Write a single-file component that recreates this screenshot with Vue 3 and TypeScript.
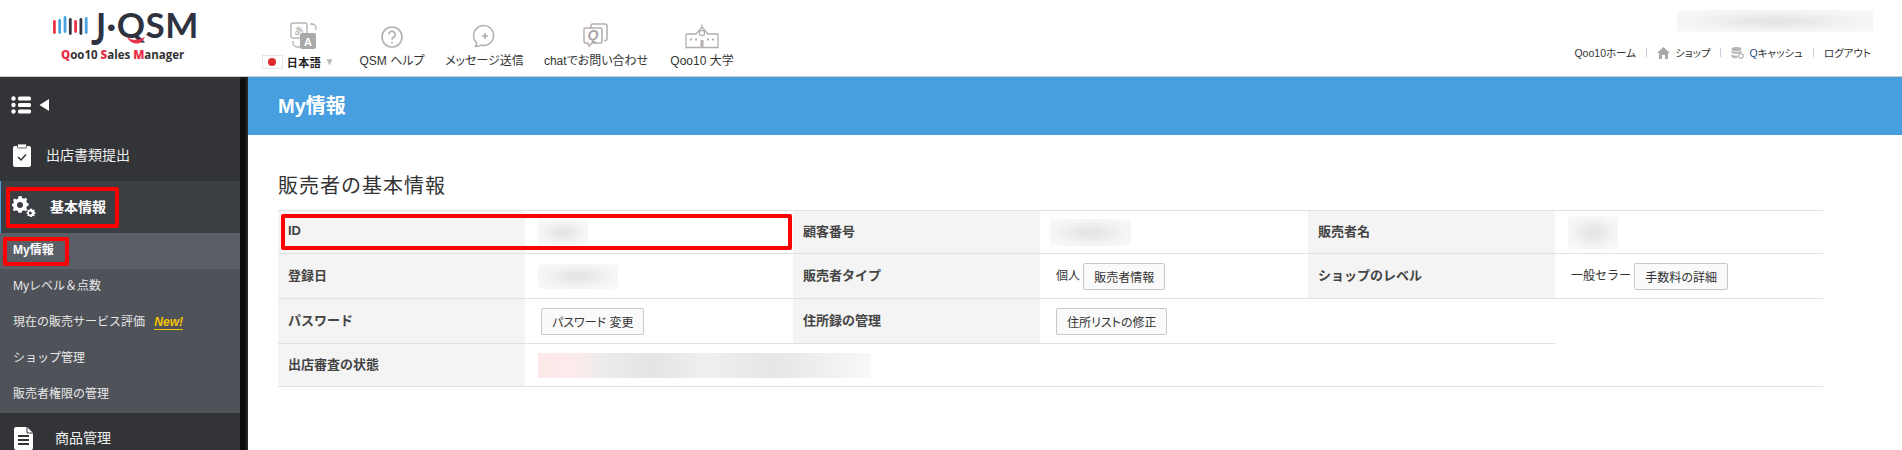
<script setup lang="ts">
interface NavItem {
  label: string
  icon: string
  width: number
}

const navItems: NavItem[] = [
  { label: 'QSM ヘルプ', icon: 'help', width: 92 },
  { label: 'メッセージ送信', icon: 'message', width: 93 },
  { label: 'chatでお問い合わせ', icon: 'chat', width: 130 },
  { label: 'Qoo10 大学', icon: 'school', width: 82 },
]

const subMenu = ['Myレベル＆点数', '現在の販売サービス評価', 'ショップ管理', '販売者権限の管理']

const bars = [
  { x: 1, y: 14, h: 14, c: '#ee3344' },
  { x: 6.300, y: 13, h: 15, c: '#4aa3e0' },
  { x: 11.600, y: 10, h: 17, c: '#4aa3e0' },
  { x: 16.900, y: 12, h: 17, c: '#333645' },
  { x: 22.200, y: 14, h: 13, c: '#ee3344' },
  { x: 27.500, y: 12, h: 17, c: '#333645' },
  { x: 32.800, y: 11, h: 17, c: '#4aa3e0' },
]
</script>

<template>
  <div class="page">
    <header class="header">
      <div class="logo">
        <div class="logo-top">
          <svg class="logo-bars" width="36" height="40" viewBox="0 0 36 40">
            <rect v-for="b in bars" :key="b.x" :x="b.x" :y="b.y" width="2.800" :height="b.h" rx="1.400" :fill="b.c" />
          </svg>
          <span class="logo-name"><span class="logo-j">J</span>·QSM</span>
          <svg class="swoosh" width="18" height="7" viewBox="0 0 18 7"><path d="M0 0c4 3 9 3.500 13 2l5-2c-2 4-5 7-9 6.500C5 6.200 2 4 0 0z" fill="#e8304a" /></svg>
        </div>
        <div class="logo-sub"><b>Q</b>oo10 <b>S</b>ales <b>M</b>anager</div>
      </div>

      <nav class="nav">
        <div class="nav-item lang">
          <svg class="lang-icon" width="28" height="28" viewBox="0 0 28 28">
            <rect x="1" y="1" width="16" height="15" rx="2" fill="#fff" stroke="#b5b5b5" stroke-width="1.400" />
            <text x="9" y="13" class="icon-char" fill="#aaa">あ</text>
            <path d="M20 2h2a4 4 0 0 1 4 4v2M3 19v2a4 4 0 0 0 4 4h3" fill="none" stroke="#b5b5b5" stroke-width="1.400" />
            <rect x="10" y="11" width="16" height="16" rx="2" fill="#a9a9a9" />
            <text x="18" y="24" class="icon-a" fill="#fff">A</text>
          </svg>
          <div class="lang-row">
            <span class="flag"><i></i></span>
            <b>日本語</b>
            <span class="caret">▼</span>
          </div>
        </div>

        <div v-for="item in navItems" :key="item.label" class="nav-item" :style="{ width: `${item.width}px` }">
          <svg v-if="item.icon === 'help'" width="28" height="28" viewBox="0 0 28 28" fill="none" stroke="#b0b0b0">
            <circle cx="14" cy="15" r="10" stroke-width="1.600" />
            <path d="M10.800 12.500a3.200 3.200 0 1 1 4.800 2.800c-1 .6-1.600 1.200-1.600 2.400" stroke-width="1.600" />
            <circle cx="14" cy="20.500" r="1" fill="#b0b0b0" stroke="none" />
          </svg>
          <svg v-else-if="item.icon === 'message'" width="28" height="28" viewBox="0 0 28 28" fill="none" stroke="#b0b0b0">
            <path d="M4.500 24.500c.9-1.300 1.300-2.500 1-3.900A10 10 0 1 1 10 23.200c-1.700.9-3.500 1.500-5.500 1.300z" stroke-width="1.500" />
            <path d="M14 11v6M11 14h6" stroke="#aaa" stroke-width="1.500" />
          </svg>
          <svg v-else-if="item.icon === 'chat'" width="28" height="28" viewBox="0 0 28 28" fill="none" stroke="#b4aeae">
            <path d="M9 6V3.500A1.500 1.500 0 0 1 10.500 2h13A1.500 1.500 0 0 1 25 3.500V17a1.500 1.500 0 0 1-1.500 1.500H22" stroke-width="1.500" />
            <path d="M3.500 6h15A1.500 1.500 0 0 1 20 7.500v12a1.500 1.500 0 0 1-1.500 1.500H10l-3 3-1-3H3.500A1.500 1.500 0 0 1 2 19.500v-12A1.500 1.500 0 0 1 3.500 6z" fill="#fff" stroke-width="1.500" />
            <text x="11" y="18" class="icon-q" fill="#a9a3a3" stroke="none">Q</text>
          </svg>
          <svg v-else width="34" height="28" viewBox="0 0 34 28" fill="none" stroke="#b4aeae">
            <path d="M1 12h10l6-7 6 7h10M1 12v13.500h32V12" stroke-width="1.300" />
            <circle cx="17" cy="11" r="2.600" stroke-width="1.200" />
            <path d="M17 2v3" stroke-width="1" />
            <path d="M5 17.500h2M10 17.500h2M22 17.500h2M27 17.500h2" stroke-width="2" />
            <rect x="15.500" y="18" width="3" height="7.500" fill="#b4aeae" stroke="none" />
          </svg>
          <span class="nav-label">{{ item.label }}</span>
        </div>
      </nav>

      <div class="header-right">
        <div class="user blur"></div>
        <div class="links">
          <span>Qoo10ホーム</span>
          <i class="sep"></i>
          <span class="with-icon">
            <svg width="13" height="12" viewBox="0 0 13 12" fill="#a9a9a9"><path d="M6.500 0 13 6h-2v6H8V8H5v4H2V6H0z" /></svg>
            ショップ
          </span>
          <i class="sep"></i>
          <span class="with-icon">
            <svg width="13" height="12" viewBox="0 0 13 12">
              <ellipse cx="5.500" cy="2" rx="5" ry="2" fill="#b5b5b5" />
              <path d="M.5 3.500c1 1.800 9 1.800 10 0V5.500c-1 1.800-9 1.800-10 0zM.5 7c1 1.800 5 1.800 6 1.500V11c-2 .5-5 0-6-1z" fill="#b5b5b5" />
              <circle cx="10" cy="9" r="2.300" fill="#fff" stroke="#999" />
            </svg>
            <span class="qcash"><span>Q</span>キャッシュ</span>
          </span>
          <i class="sep"></i>
          <span>ログアウト</span>
        </div>
      </div>
    </header>

    <div class="body">
      <aside class="sidebar">
        <div class="side-inner">
          <div class="toggle">
            <svg width="40" height="18" viewBox="0 0 40 18" fill="#fff">
              <circle cx="2.500" cy="2.500" r="2.200" />
              <circle cx="2.500" cy="9" r="2.200" />
              <circle cx="2.500" cy="15.500" r="2.200" />
              <rect x="7" y="0.500" width="13" height="4" rx="1.500" />
              <rect x="7" y="7" width="13" height="4" rx="1.500" />
              <rect x="7" y="13.500" width="13" height="4" rx="1.500" />
              <path d="M29 3v12L19.500 9z" transform="translate(9 0)" />
            </svg>
          </div>

          <div class="group docs-row">
            <svg width="18" height="23" viewBox="0 0 18 23">
              <rect x="0" y="2" width="18" height="21" rx="2" fill="#fff" />
              <rect x="4.500" y="0" width="9" height="4" rx="1" fill="#fff" stroke="#333438" stroke-width="0.800" />
              <path d="M5 13l3 3 5-5.500" fill="none" stroke="#333438" stroke-width="1.500" />
            </svg>
            <span class="group-label docs">出店書類提出</span>
          </div>

          <div class="group active">
            <svg width="24" height="22" viewBox="0 0 24 22" fill="#fff">
              <path d="M8 3l2 .3.700 1.700 1.800.700 1.700-.9 1.500 1.500-.9 1.700.7 1.800 1.700.7v2l-1.700.7-.7 1.800.9 1.700-1.500 1.500-1.700-.9-1.800.7-.7 1.700H7l-.7-1.700-1.800-.7-1.700.9-1.500-1.500.9-1.700-.7-1.800L0 13.200v-2l1.700-.7.700-1.800-.9-1.700L3 5.500l1.700.9 1.800-.7L7.200 3zM8.500 9a3 3 0 1 0 0 6 3 3 0 0 0 0-6z" transform="translate(-.500 -3)" />
              <path d="M19 12.500l1 .3.300.9.900.3.800-.4.700.7-.4.800.3.900.900.4v1l-.9.400-.3.900.4.800-.7.700-.8-.4-.9.300-.3.900h-2l-.3-.9-.9-.3-.8.400-.7-.7.4-.8-.3-.9-.9-.4v-1l.9-.4.3-.9-.4-.8.7-.7.8.4.900-.3.300-.9zM18.300 15.500a1.500 1.500 0 1 0 0 3 1.500 1.500 0 0 0 0-3z" />
            </svg>
            <b class="group-label info">基本情報</b>
          </div>

          <ul class="sub">
            <li class="current"><b>My情報</b></li>
            <li v-for="(name, i) in subMenu" :key="name">
              {{ name }}
              <em v-if="i === 1" class="new">New!</em>
            </li>
          </ul>

          <div class="group last">
            <svg width="19" height="23" viewBox="0 0 19 23">
              <path d="M2 0h11l6 6v15a2 2 0 0 1-2 2H2a2 2 0 0 1-2-2V2a2 2 0 0 1 2-2z" fill="#fff" />
              <path d="M4 9h11M4 13h11M4 17h11" stroke="#333438" stroke-width="2" />
              <path d="M13 0v6h6" fill="none" stroke="#333438" stroke-width="1" />
            </svg>
            <span class="group-label goods">商品管理</span>
          </div>
        </div>
        <div class="scrollbar"><i></i></div>

        <div class="mark mark-info"></div>
        <div class="mark mark-my"></div>
      </aside>

      <main class="main">
        <h1 class="title-bar">My情報</h1>
        <section class="content">
          <h2 class="heading">販売者の基本情報</h2>
          <div class="table-wrap">
            <table class="info-table">
              <colgroup>
                <col class="c-l"><col class="c-v"><col class="c-l"><col class="c-v"><col class="c-l"><col class="c-v">
              </colgroup>
              <tbody>
                <tr class="r1">
                  <th>ID</th>
                  <td><span class="blur b-id"></span></td>
                  <th>顧客番号</th>
                  <td><span class="blur b-no"></span></td>
                  <th>販売者名</th>
                  <td><span class="blur b-name"></span></td>
                </tr>
                <tr class="r2">
                  <th>登録日</th>
                  <td><span class="blur b-date"></span></td>
                  <th>販売者タイプ</th>
                  <td class="has-btn tight">個人 <button type="button">販売者情報</button></td>
                  <th>ショップのレベル</th>
                  <td class="has-btn tight">一般セラー <button type="button">手数料の詳細</button></td>
                </tr>
                <tr class="r3">
                  <th>パスワード</th>
                  <td class="has-btn"><button type="button">パスワード 変更</button></td>
                  <th>住所録の管理</th>
                  <td class="has-btn"><button type="button">住所リストの修正</button></td>
                  <td></td>
                  <td rowspan="2" class="no-line"></td>
                </tr>
                <tr class="r4">
                  <th>出店審査の状態</th>
                  <td colspan="4"><span class="blur b-status"></span></td>
                </tr>
              </tbody>
            </table>
            <div class="mark mark-id"></div>
          </div>
        </section>
      </main>
    </div>
  </div>
</template>

<style>
html,
body {
  margin: 0;
  background: #fff;
}
</style>

<style scoped>
.page {
  width: 1902px;
  height: 450px;
  overflow: hidden;
  font-family: "Liberation Sans", "Noto Sans CJK JP", sans-serif;
  color: #333;
  display: flex;
  flex-direction: column;
}

.header {
  height: 76px;
  flex: none;
  display: flex;
  border-bottom: 1px solid #ccc;
  background: #fff;
  position: relative;
}

.logo {
  width: 262px;
  flex: none;
  padding: 6px 0 0 52px;
  box-sizing: border-box;
}

.logo-top {
  display: flex;
  align-items: flex-start;
  height: 40px;
  position: relative;
}

.logo-bars {
  flex: none;
}

.swoosh {
  position: absolute;
  left: 75px;
  top: 31px;
}

.logo-name {
  font-family: "Lato", sans-serif;
  font-weight: 700;
  font-size: 35px;
  line-height: 36px;
  height: 36px;
  color: #2f3240;
  margin-left: 3px;
  letter-spacing: 0.5px;
}

.logo-j {
  display: inline-block;
  transform: scaleY(1.28);
  transform-origin: 50% 22%;
}

.logo-sub {
  font-family: "Open Sans", sans-serif;
  font-weight: 700;
  font-size: 11.500px;
  line-height: 14px;
  color: #333;
  margin: 2px 0 0 9px;
  white-space: nowrap;
}

.logo-sub b {
  color: #e8304a;
}

.nav {
  display: flex;
  align-items: flex-start;
  padding-top: 22px;
}

.nav-item {
  display: flex;
  flex-direction: column;
  align-items: center;
  font-size: 12px;
  color: #333;
  white-space: nowrap;
}

.nav-item svg {
  height: 28px;
  display: block;
}

.nav-label {
  margin-top: 3px;
  line-height: 17px;
  font-feature-settings: "palt";
}

.lang {
  width: 72px;
  margin-right: 12px;
}

.lang-icon {
  margin-left: 11px;
}

.lang-row {
  display: flex;
  align-items: center;
  margin-top: 3px;
  height: 17px;
  font-size: 11px;
  color: #222;
}

.lang-row b {
  margin-left: 4px;
  letter-spacing: 0.600px;
}

.flag {
  width: 19px;
  height: 12px;
  border: 1px solid #e6e6e6;
  display: flex;
  align-items: center;
  justify-content: center;
}

.flag i {
  width: 8px;
  height: 8px;
  border-radius: 50%;
  background: #dd2a2a;
}

.caret {
  font-size: 10px;
  color: #bbb;
  margin-left: 3px;
}

.icon-char {
  font-size: 10px;
  text-anchor: middle;
}

.icon-a {
  font-size: 11px;
  font-weight: 700;
  text-anchor: middle;
}

.icon-q {
  font-size: 14px;
  font-weight: 700;
  font-style: italic;
  text-anchor: middle;
}

.header-right {
  margin-left: auto;
  width: 300px;
  display: flex;
  flex-direction: column;
  align-items: flex-end;
  padding: 10px 29px 0 0;
  box-sizing: content-box;
}

.user {
  width: 196px;
  height: 22px;
}

.links {
  display: flex;
  align-items: center;
  font-size: 10.500px;
  margin-top: 13px;
  margin-right: 2px;
  white-space: nowrap;
  color: #333;
  height: 15px;
  font-feature-settings: "palt";
}

.with-icon {
  display: inline-flex;
  align-items: center;
  gap: 5px;
}

.sep {
  width: 1px;
  height: 9px;
  background: #ccd;
  margin: 0 10px;
}

.qcash span {
  color: #2a4f80;
}

.blur {
  display: inline-block;
  background: radial-gradient(ellipse at center, #e6e6e6 15%, #f4f4f4 60%, #fafafa 100%);
  vertical-align: middle;
}

.body {
  flex: 1;
  display: flex;
  min-height: 0;
}

.sidebar {
  width: 248px;
  flex: none;
  display: flex;
  background: #26272a;
  position: relative;
}

.side-inner {
  width: 240px;
  flex: none;
  background: #333438;
  color: #fff;
}

.scrollbar {
  width: 6px;
  background: #18191b;
  padding-top: 2px;
}

.scrollbar i {
  display: block;
  height: 100%;
  background: #0d0d0e;
  border-radius: 3px;
}

.toggle {
  height: 52px;
  box-sizing: border-box;
  padding: 19px 0 0 11px;
}

.toggle svg,
.group svg {
  display: block;
}

.group {
  height: 50px;
  display: flex;
  align-items: center;
  padding-left: 13px;
  box-sizing: border-box;
  position: relative;
  font-size: 14px;
}

.group.docs-row {
  height: 52px;
}

.group.active {
  height: 52px;
  background: #3b3e43;
  border-left: 1px solid #4a9fdf;
  padding-left: 11px;
}

.group.last {
  padding-left: 14px;
}

.group-label {
  white-space: nowrap;
  color: #eee;
  padding-bottom: 3px;
}

.group-label.docs {
  margin-left: 15px;
}

.group-label.info {
  margin-left: 14px;
  color: #fff;
}

.group-label.goods {
  margin-left: 22px;
}

.sub {
  list-style: none;
  margin: 0;
  padding: 0;
  background: #4f5258;
  font-size: 12px;
  color: #e8e8e8;
}

.sub li {
  height: 36px;
  line-height: 35px;
  padding-left: 13px;
  white-space: nowrap;
}

.sub .current {
  background: #5a5e66;
  color: #fff;
}

.new {
  display: inline-block;
  margin-left: 6px;
  font-family: "Liberation Sans", sans-serif;
  font-weight: 700;
  color: #f5c400;
  line-height: 13px;
  border-bottom: 1px solid #f5c400;
}

.main {
  flex: 1;
  min-width: 0;
}

.title-bar {
  margin: 0;
  height: 58px;
  line-height: 59px;
  padding-left: 30px;
  background: #489fdf;
  color: #fff;
  font-size: 20px;
  font-weight: 700;
}

.content {
  padding: 0 79px 0 30px;
}

.heading {
  margin: 0;
  padding-top: 39px;
  height: 36px;
  line-height: 24px;
  box-sizing: content-box;
  font-size: 20px;
  font-weight: 400;
  letter-spacing: 1px;
  color: #333;
}

.table-wrap {
  position: relative;
}

.info-table {
  width: 1545px;
  table-layout: fixed;
  border-collapse: collapse;
  font-size: 12px;
}

.c-l {
  width: 247px;
}

.c-v {
  width: 268px;
}

.info-table th,
.info-table td {
  border-top: 1px solid #e1e1e1;
  border-bottom: 1px solid #e1e1e1;
  padding: 0 10px;
  text-align: left;
  box-sizing: border-box;
  overflow: visible;
}

.info-table th {
  background: #f4f4f4;
  font-size: 13px;
  font-weight: 700;
  color: #444;
  padding-bottom: 4px;
}

.info-table td {
  padding-left: 13px;
  color: #333;
}

.info-table td.no-line {
  border-bottom: 1px solid #e1e1e1;
}

.info-table .has-btn {
  padding-left: 16px;
}

.r1 {
  height: 43px;
}

.r2,
.r3 {
  height: 45px;
}

.r4 {
  height: 43px;
}

.info-table button {
  height: 27px;
  padding: 0 10px;
  font: inherit;
  font-feature-settings: "palt";
  color: #333;
  background: #fafafa;
  border: 1px solid #c8c8c8;
  border-radius: 2px;
  vertical-align: middle;
}

.tight {
  white-space: nowrap;
}

.b-id {
  width: 50px;
  height: 25px;
}

.b-no {
  width: 81px;
  height: 27px;
  margin-left: -3px;
}

.b-name {
  width: 50px;
  height: 33px;
}

.b-date {
  width: 80px;
  height: 25px;
}

.b-status {
  width: 333px;
  height: 25px;
  background: linear-gradient(90deg, #fde8e8 0, #fdeaea 10%, #ececec 20%, #e4e4e4 35%, #f0f0f0 50%, #e6e6e6 70%, #f8f8f8 100%);
}

.mark {
  position: absolute;
  border: 4px solid #f00;
  border-radius: 2px;
  box-sizing: border-box;
  pointer-events: none;
}

.mark-info {
  left: 6px;
  top: 110px;
  width: 113px;
  height: 41px;
}

.mark-my {
  left: 3px;
  top: 160px;
  width: 66px;
  height: 29px;
}

.mark-id {
  left: 3px;
  top: 4px;
  width: 511px;
  height: 36px;
}
</style>
